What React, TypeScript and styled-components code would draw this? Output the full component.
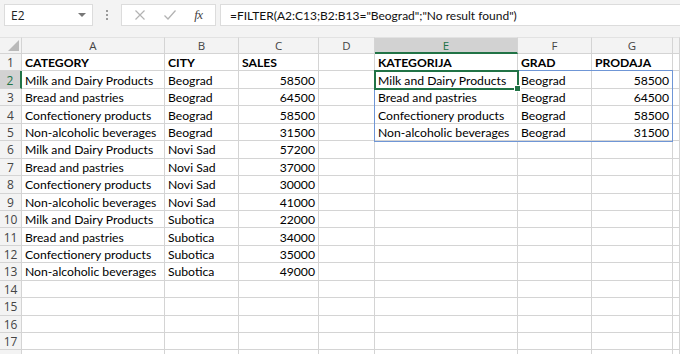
import styled, { createGlobalStyle } from 'styled-components';

const GlobalStyle = createGlobalStyle`
  html, body {
    margin: 0;
    padding: 0;
    background: #ffffff;
  }
  body {
    font-family: Lato, "Open Sans", sans-serif;
  }
`;

// last column is only a sliver at the window edge, so it gets no label
const COLS = ['A', 'B', 'C', 'D', 'E', 'F', 'G', ''];

type Row = [string, string, string, string, string, string, string];

const DATA: Row[] = [
  ['CATEGORY', 'CITY', 'SALES', '', 'KATEGORIJA', 'GRAD', 'PRODAJA'],
  ['Milk and Dairy Products', 'Beograd', '58500', '', 'Milk and Dairy Products', 'Beograd', '58500'],
  ['Bread and pastries', 'Beograd', '64500', '', 'Bread and pastries', 'Beograd', '64500'],
  ['Confectionery products', 'Beograd', '58500', '', 'Confectionery products', 'Beograd', '58500'],
  ['Non-alcoholic beverages', 'Beograd', '31500', '', 'Non-alcoholic beverages', 'Beograd', '31500'],
  ['Milk and Dairy Products', 'Novi Sad', '57200', '', '', '', ''],
  ['Bread and pastries', 'Novi Sad', '37000', '', '', '', ''],
  ['Confectionery products', 'Novi Sad', '30000', '', '', '', ''],
  ['Non-alcoholic beverages', 'Novi Sad', '41000', '', '', '', ''],
  ['Milk and Dairy Products', 'Subotica', '22000', '', '', '', ''],
  ['Bread and pastries', 'Subotica', '34000', '', '', '', ''],
  ['Confectionery products', 'Subotica', '35000', '', '', '', ''],
  ['Non-alcoholic beverages', 'Subotica', '49000', '', '', '', ''],
];

const ROW_COUNT = 18;
const LABELLED_ROWS = 17;

const Window = styled.div`
  width: 680px;
  height: 354px;
  overflow: hidden;
  background: #ffffff;
`;

const FormulaBar = styled.div`
  height: 37px;
  box-sizing: border-box;
  padding: 4px 0 0 4px;
  background: #f3f3f3;
  display: flex;
  align-items: flex-start;
`;

const NameBox = styled.div`
  width: 89px;
  height: 22px;
  box-sizing: border-box;
  background: #ffffff;
  border: 1px solid #dcdcdc;
  display: flex;
  align-items: center;
  justify-content: space-between;
  padding: 0 6px 0 6px;
  font-family: "Open Sans", sans-serif;
  font-size: 12px;
  color: #222;
`;

const DropArrow = styled.span`
  width: 0;
  height: 0;
  border-left: 4px solid transparent;
  border-right: 4px solid transparent;
  border-top: 4px solid #777;
`;

const Dots = styled.div`
  width: 28px;
  height: 22px;
  display: flex;
  flex-direction: column;
  align-items: center;
  justify-content: center;
  gap: 2px;

  span {
    width: 2px;
    height: 2px;
    background: #9a9a9a;
  }
`;

const FuncBox = styled.div`
  width: 95px;
  height: 22px;
  box-sizing: border-box;
  background: #ffffff;
  border: 1px solid #dcdcdc;
  display: flex;
  align-items: center;
  justify-content: space-around;
  padding: 0 4px;
`;

const Fx = styled.span`
  font-family: "Liberation Serif", serif;
  font-style: italic;
  font-size: 13px;
  color: #444;
  letter-spacing: -0.5px;
`;

const FormulaInput = styled.div`
  flex: 1;
  margin-left: 4px;
  height: 22px;
  box-sizing: border-box;
  background: #ffffff;
  border: 1px solid #dcdcdc;
  border-right: none;
  display: flex;
  align-items: center;
  padding-left: 9px;
  font-family: Lato, sans-serif;
  font-size: 12px;
  color: #111;
  white-space: nowrap;
`;

const Sheet = styled.div`
  position: relative;
  display: grid;
  grid-template-columns: 22px 143px 74px 80px 56px 143px 74px 81px 7px;
  grid-template-rows: 17px repeat(${ROW_COUNT}, 17.44px);
`;

const Corner = styled.div`
  position: relative;
  background: #f3f3f3;
  border-right: 1px solid #d4d4d4;
  border-bottom: 1px solid #d4d4d4;
  border-top: 1px solid #e2e2e2;

  &::after {
    content: '';
    position: absolute;
    right: 2px;
    bottom: 2px;
    width: 0;
    height: 0;
    border-left: 11px solid transparent;
    border-bottom: 11px solid #b9b9b9;
  }
`;

const ColHead = styled.div<{ $active?: boolean }>`
  background: ${(p) => (p.$active ? '#d2d2d2' : '#f3f3f3')};
  color: ${(p) => (p.$active ? '#217346' : '#444')};
  border-right: 1px solid #d4d4d4;
  border-top: 1px solid #e2e2e2;
  border-bottom: ${(p) => (p.$active ? '2px solid #217346' : '1px solid #d4d4d4')};
  display: flex;
  align-items: center;
  justify-content: center;
  font-family: "Open Sans", sans-serif;
  font-size: 11.5px;
  box-sizing: border-box;
`;

const RowHead = styled.div<{ $active?: boolean }>`
  background: ${(p) => (p.$active ? '#d2d2d2' : '#f3f3f3')};
  color: ${(p) => (p.$active ? '#217346' : '#444')};
  border-bottom: 1px solid #d4d4d4;
  border-right: ${(p) => (p.$active ? '2px solid #217346' : '1px solid #d4d4d4')};
  display: flex;
  align-items: center;
  justify-content: center;
  font-family: "Open Sans", sans-serif;
  font-size: 12px;
  padding-top: 1px;
  box-sizing: border-box;
`;

const Cell = styled.div<{ $num?: boolean; $bold?: boolean }>`
  border-right: 1px solid #d4d4d4;
  border-bottom: 1px solid #d4d4d4;
  display: flex;
  align-items: center;
  justify-content: ${(p) => (p.$num ? 'flex-end' : 'flex-start')};
  padding: 1px 3px 0 3px;
  font-size: 12.2px;
  font-weight: ${(p) => (p.$bold ? 700 : 400)};
  color: #000;
  white-space: nowrap;
  overflow: hidden;
  box-sizing: border-box;
`;

const RangeBox = styled.div`
  position: absolute;
  grid-column: 6 / 9;
  grid-row: 3 / 7;
  inset: -1px 0 -1px -1px;
  border: 1px solid #6f96d6;
  pointer-events: none;
`;

const ActiveBox = styled.div`
  position: absolute;
  grid-column: 6 / 7;
  grid-row: 3 / 4;
  inset: -1px -1px -1px -1px;
  border: 2px solid #217346;
  pointer-events: none;

  &::after {
    content: '';
    position: absolute;
    right: -4px;
    bottom: -4px;
    width: 5px;
    height: 5px;
    background: #217346;
    border: 1px solid #ffffff;
  }
`;

const isNumber = (v: string) => /^\d+$/.test(v);

export default function App() {
  const rows = Array.from({ length: ROW_COUNT }, (_, i) => i + 1);

  return (
    <Window>
      <GlobalStyle />
      <FormulaBar>
        <NameBox>
          <span>E2</span>
          <DropArrow />
        </NameBox>
        <Dots>
          <span />
          <span />
          <span />
        </Dots>
        <FuncBox>
          <svg width="12" height="12" viewBox="0 0 12 12">
            <path d="M1.5 1.5 L10.5 10.5 M10.5 1.5 L1.5 10.5" stroke="#b3b3b3" strokeWidth="1.2" fill="none" />
          </svg>
          <svg width="14" height="12" viewBox="0 0 14 12">
            <path d="M1.5 6.5 L5 10 L12.5 1.5" stroke="#b3b3b3" strokeWidth="1.3" fill="none" />
          </svg>
          <Fx>fx</Fx>
        </FuncBox>
        <FormulaInput>=FILTER(A2:C13;B2:B13="Beograd";"No result found")</FormulaInput>
      </FormulaBar>

      <Sheet>
        <Corner />
        {COLS.map((c, i) => (
          <ColHead key={`c${i}`} $active={c === 'E'}>
            {c}
          </ColHead>
        ))}

        {rows.map((r) => {
          const data = DATA[r - 1];
          return [
            <RowHead key={`h${r}`} $active={r === 2}>
              {r <= LABELLED_ROWS ? r : ''}
            </RowHead>,
            ...COLS.map((c, ci) => {
              const v = data && ci < 7 ? data[ci] : '';
              return (
                <Cell key={`${ci}-${r}`} $num={isNumber(v)} $bold={r === 1}>
                  {v}
                </Cell>
              );
            }),
          ];
        })}

        <RangeBox />
        <ActiveBox />
      </Sheet>
    </Window>
  );
}
